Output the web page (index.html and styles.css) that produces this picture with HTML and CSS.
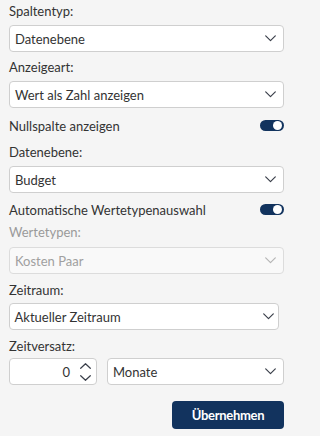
FILE: index.html
```html
<!DOCTYPE html>
<html lang="de">
<head>
<meta charset="utf-8">
<title>Spalteneinstellungen</title>
<link rel="stylesheet" href="styles.css">
</head>
<body>
<div class="panel">
  <div class="lbl l1">Spaltentyp:</div>
  <div class="select s-tight">
    <span>Datenebene</span>
    <svg class="chev" viewBox="0 0 11 7"><polyline points="0.7,0.8 5.5,5.6 10.3,0.8"/></svg>
  </div>

  <div class="lbl l2">Anzeigeart:</div>
  <div class="select s-tight">
    <span>Wert als Zahl anzeigen</span>
    <svg class="chev" viewBox="0 0 11 7"><polyline points="0.7,0.8 5.5,5.6 10.3,0.8"/></svg>
  </div>

  <div class="toggle-row t1">
    <span>Nullspalte anzeigen</span>
    <span class="toggle"><span class="knob"></span></span>
  </div>

  <div class="lbl l3">Datenebene:</div>
  <div class="select s-tight">
    <span>Budget</span>
    <svg class="chev" viewBox="0 0 11 7"><polyline points="0.7,0.8 5.5,5.6 10.3,0.8"/></svg>
  </div>

  <div class="toggle-row t2">
    <span>Automatische Wertetypenauswahl</span>
    <span class="toggle"><span class="knob"></span></span>
  </div>

  <div class="lbl l4 disabled">Wertetypen:</div>
  <div class="select s4 is-disabled">
    <span>Kosten Paar</span>
    <svg class="chev" viewBox="0 0 11 7"><polyline points="0.7,0.8 5.5,5.6 10.3,0.8"/></svg>
  </div>

  <div class="lbl l5">Zeitraum:</div>
  <div class="select s5 narrow">
    <span>Aktueller Zeitraum</span>
    <svg class="chev" viewBox="0 0 11 7"><polyline points="0.7,0.8 5.5,5.6 10.3,0.8"/></svg>
  </div>

  <div class="lbl l6">Zeitversatz:</div>
  <div class="offset-row">
    <div class="number">
      <span class="num-val">0</span>
      <span class="spin">
        <svg class="spin-up" viewBox="0 0 11 6"><polyline points="0.7,5.3 5.5,0.7 10.3,5.3"/></svg>
        <svg class="spin-down" viewBox="0 0 11 6"><polyline points="0.7,0.7 5.5,5.3 10.3,0.7"/></svg>
      </span>
    </div>
    <div class="select unit">
      <span>Monate</span>
      <svg class="chev" viewBox="0 0 11 7"><polyline points="0.7,0.8 5.5,5.6 10.3,0.8"/></svg>
    </div>
  </div>

  <div class="actions">
    <button class="btn" type="button">Übernehmen</button>
  </div>
</div>
</body>
</html>
```

FILE: styles.css
```css
html, body {
  margin: 0;
  padding: 0;
  background: #f5f5f5;
}

body {
  font-family: Lato, "Open Sans", "Liberation Sans", sans-serif;
  font-size: 13px;
  color: #333333;
  width: 291px;
  height: 436px;
  overflow: hidden;
}

.panel {
  display: flex;
  flex-direction: column;
  padding: 2px 7px 0 9px;
}

.lbl {
  line-height: 18px;
  height: 18px;
}

.l2, .l3 { margin-top: 6px; }
.l4 { margin-top: 2px; }
.l5, .l6 { margin-top: 7px; }

.disabled { color: #9a9a9a; }

.select {
  box-sizing: border-box;
  height: 27px;
  margin-top: 5px;
  background: #ffffff;
  border: 1px solid #cfcfcf;
  border-radius: 4px;
  display: flex;
  align-items: center;
  justify-content: space-between;
  padding: 0 7px 0 5px;
  color: #333333;
}

.s4 { margin-top: 6px; }
.s5 { margin-top: 4px; }

.select.narrow {
  width: 270px;
  margin-left: -0.5px;
  padding-right: 4px;
}

.select.is-disabled {
  background: #f9f9f9;
  border-color: #dcdcdc;
  color: #a0a0a0;
}

.chev {
  width: 11px;
  height: 7px;
  flex: none;
}

.chev polyline,
.spin polyline {
  fill: none;
  stroke: #3a3f4a;
  stroke-width: 1.2;
  stroke-linecap: round;
  stroke-linejoin: round;
}

.is-disabled .chev polyline { stroke: #b5b5b5; }

.toggle-row {
  height: 23px;
  margin-top: 6px;
  display: flex;
  align-items: center;
  justify-content: space-between;
  line-height: 18px;
}

.t2 { margin-top: 5px; }

.toggle {
  position: relative;
  width: 24px;
  height: 11px;
  border-radius: 6px;
  background: #12335e;
  flex: none;
}

.knob {
  position: absolute;
  top: 1px;
  right: 2px;
  width: 9px;
  height: 9px;
  border-radius: 50%;
  background: #ffffff;
}

.offset-row {
  display: flex;
  gap: 10px;
  margin-top: 3px;
}

.number {
  box-sizing: border-box;
  width: 88px;
  height: 27px;
  background: #ffffff;
  border: 1px solid #cfcfcf;
  border-radius: 4px;
  display: flex;
  align-items: center;
  justify-content: flex-end;
  padding-right: 5px;
}

.num-val {
  margin-right: 10px;
}

.spin {
  display: flex;
  flex-direction: column;
  gap: 6px;
}

.spin svg {
  width: 11px;
  height: 6px;
  display: block;
}

.select.unit {
  flex: 1;
  margin-top: 0;
}

.actions {
  display: flex;
  justify-content: flex-end;
  margin-top: 16px;
}

.btn {
  width: 112px;
  height: 28px;
  border: none;
  border-radius: 4px;
  background: #12335e;
  color: #ffffff;
  font-family: Lato, "Open Sans", "Liberation Sans", sans-serif;
  font-weight: 700;
  font-size: 13px;
  letter-spacing: -0.3px;
  padding: 0;
}
```
